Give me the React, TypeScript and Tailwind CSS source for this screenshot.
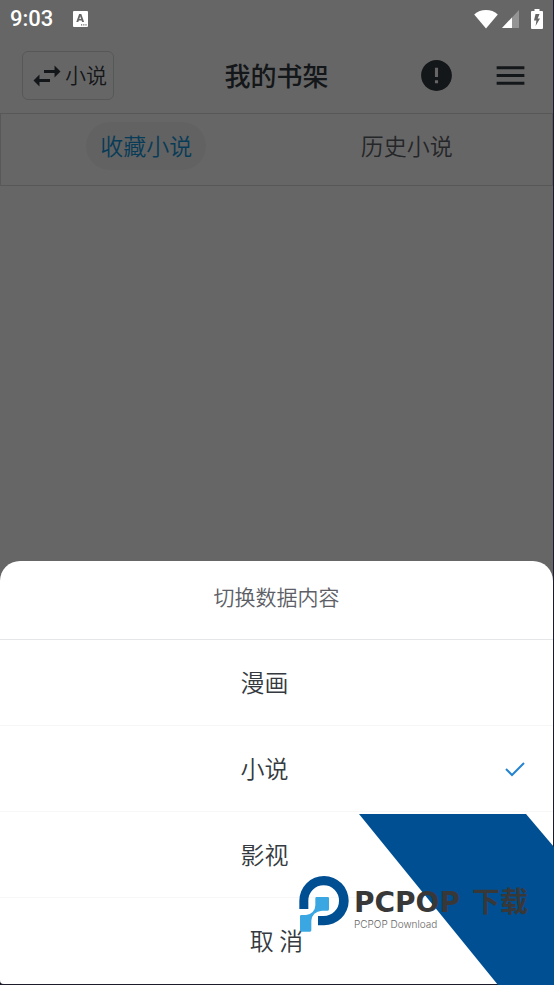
import React, { useState } from 'react';
import { MdError, MdMenu, MdSwapHoriz } from 'react-icons/md';

const OPTIONS = ['漫画', '小说', '影视'];
const TABS = ['收藏小说', '历史小说'];

const StatusBar: React.FC = () => (
  <div className="relative z-20 flex h-[38px] items-center justify-between px-[10px] text-white">
    <div className="flex items-center gap-5">
      <span className="font-['Roboto'] text-[22px] font-medium leading-6">9:03</span>
      <svg className="h-4 w-[15px]" viewBox="0 0 15 16" aria-hidden="true">
        <path
          fill="currentColor"
          fillRule="evenodd"
          d="M1 0h13a1 1 0 0 1 1 1v14a1 1 0 0 1-1 1H1a1 1 0 0 1-1-1V1a1 1 0 0 1 1-1zM6.100 3 3.300 11h2l.5-1.500h2.800l.5 1.500h2L8.300 3zM7.200 5.200 8.100 8.100H6.300zM8 13.200v1.200h1.200v-1.200zm2.200 0v1.200h1.200v-1.200zm2.200 0v1.200h1.200v-1.200z"
        />
      </svg>
    </div>
    <div className="flex items-center">
      <svg className="h-[19px] w-6" viewBox="0 0 24 19" aria-hidden="true">
        <path fill="currentColor" d="M12 18.500 .2 4.400C3.500 1.500 7.500 0 12 0s8.500 1.500 11.800 4.400z" />
      </svg>
      <svg className="ml-1 h-[18px] w-[17px]" viewBox="0 0 17 18" aria-hidden="true">
        <path fill="currentColor" fillOpacity="0.3" d="M17 0v18H0z" />
        <path fill="currentColor" d="M10 7.400V18H0z" />
      </svg>
      <svg className="ml-3 h-5 w-3" viewBox="0 0 12 20" aria-hidden="true">
        <path
          fill="currentColor"
          fillRule="evenodd"
          d="M3.500 0h5v2H11a1 1 0 0 1 1 1v16a1 1 0 0 1-1 1H1a1 1 0 0 1-1-1V3a1 1 0 0 1 1-1h2.500zM4.500 5 3 11.500h2.400L4.600 17l4.400-7.500H6.700L8.500 5z"
        />
      </svg>
    </div>
  </div>
);

const Watermark: React.FC = () => (
  <div className="pointer-events-none absolute bottom-0 right-0 z-30 flex h-[171px] w-[255px] items-start pt-[62px]">
    <svg className="absolute bottom-0 right-0 h-[171px] w-[195px]" viewBox="0 0 195 171" aria-hidden="true">
      <path fill="#004f93" d="M0 0h167l28 33v138h-56z" />
    </svg>
    <svg className="relative h-14 w-[50px] shrink-0" viewBox="27 18 150 168" aria-hidden="true">
      <path fill="#004f93" d="M28 117V92a74 74 0 1 1 73 74H84v-28h17a46 46 0 1 0-46-46v25z" />
      <path
        fill="#3aa6e2"
        d="M80 81h33q4 0 4 4v33q0 4-4 4H96q-14 1-23 9-9 9-9 21v29q0 4-4 4H34q-4 0-4-4v-42q0-4 4-4h14q12-1 20-9 8-8 8-20V85q0-4 4-4z"
      />
    </svg>
    <div className="relative ml-[5px] flex flex-col whitespace-nowrap pt-3">
      <div className="flex h-[30px] items-baseline gap-3 font-bold leading-6 text-[#383838]">
        <span className="font-['DejaVu_Sans'] text-[28px]">PCPOP</span>
        <span className="font-['Noto_Sans_CJK_SC'] text-[28px]">下载</span>
      </div>
      <span className="font-['Inter'] text-[10px] leading-3 text-[#666]">PCPOP Download</span>
    </div>
  </div>
);

interface ActionSheetProps {
  selected: string;
  onSelect: (value: string) => void;
  onCancel: () => void;
}

const ActionSheet: React.FC<ActionSheetProps> = ({ selected, onSelect, onCancel }) => (
  <div className="absolute inset-0 z-10 flex flex-col justify-end bg-black/60">
    <section role="dialog" aria-label="切换数据内容" className="rounded-t-[20px] bg-white text-[#343a40]">
      <h2 className="flex h-[79px] items-center justify-center border-b border-[#e4e6e8] pb-[6px] text-[21px] text-[#5c6066]">
        切换数据内容
      </h2>
      {OPTIONS.map((option) => (
        <button
          key={option}
          type="button"
          aria-pressed={selected === option}
          onClick={() => onSelect(option)}
          className="flex h-[86px] w-full items-center border-b border-[#f7f7f7] px-[26px] text-2xl"
        >
          <span className="flex-1 pb-[2px] text-center">{option}</span>
          <span className="flex w-6 justify-center">
            {selected === option && (
              <svg className="h-6 w-6" viewBox="0 0 24 24" fill="none" stroke="#2583d2" strokeWidth="2" aria-hidden="true">
                <path d="M3 12 9 18 21 6" />
              </svg>
            )}
          </span>
        </button>
      ))}
      <button type="button" onClick={onCancel} className="h-[86px] w-full pb-[2px] text-center text-2xl">
        取 消
      </button>
    </section>
  </div>
);

const App: React.FC = () => {
  const [category, setCategory] = useState('小说');
  const [tab, setTab] = useState(TABS[0]);
  const [open, setOpen] = useState(true);

  const handleSelect = (value: string) => {
    setCategory(value);
    setOpen(false);
  };

  return (
    <div className="relative flex min-h-screen flex-col bg-[#1c1b2b] pb-px pr-px font-['Noto_Sans_CJK_SC',sans-serif] font-[350]">
      <main className="relative flex-1 overflow-hidden rounded-b-[4px] bg-white text-[#343a40]">
        <StatusBar />
        <header className="grid h-[75px] grid-cols-[1fr_auto_1fr] items-center px-[22px]">
          <button
            type="button"
            onClick={() => setOpen(true)}
            className="flex h-[49px] items-center justify-self-start rounded-md border border-[#d8dadc] px-[6px] text-[21px]"
          >
            <MdSwapHoriz className="h-9 w-9" />
            <span className="pb-[2px]">{category}</span>
          </button>
          <h1 className="pb-[2px] text-[26px] font-medium">我的书架</h1>
          <div className="flex items-center gap-[37px] justify-self-end pr-[2px]">
            <button type="button" aria-label="提示">
              <MdError className="h-[37px] w-[37px]" />
            </button>
            <button type="button" aria-label="菜单">
              <MdMenu className="h-[37px] w-[37px]" />
            </button>
          </div>
        </header>

        <nav className="grid h-[73px] grid-cols-2 items-start border border-[#dcdcdc] px-[15px] pt-2">
          {TABS.map((name) => (
            <button
              key={name}
              type="button"
              onClick={() => setTab(name)}
              className={`h-12 justify-self-center rounded-full px-[14px] pb-[2px] text-[23px] ${
                tab === name ? 'bg-[#f5f5f5] text-[#1296db]' : 'text-[#5c6066]'
              }`}
            >
              {name}
            </button>
          ))}
        </nav>

        {open && <ActionSheet selected={category} onSelect={handleSelect} onCancel={() => setOpen(false)} />}
      </main>
      <Watermark />
    </div>
  );
};

export default App;
